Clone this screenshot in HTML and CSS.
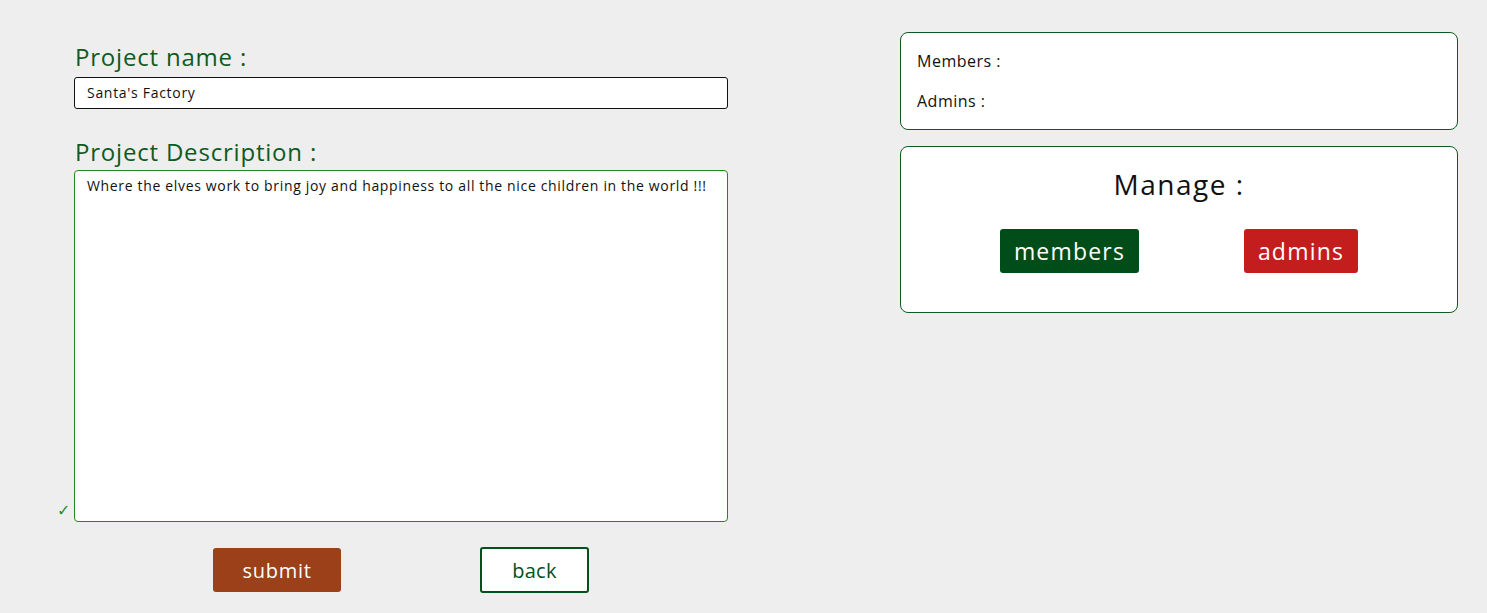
FILE: index.html
```html
<!DOCTYPE html>
<html lang="en">
<head>
<meta charset="utf-8">
<title>Edit project</title>
<link rel="stylesheet" href="styles.css">
</head>
<body>
<div class="page">
  <form class="project-form">
    <label class="field-label" for="pname">Project name :</label>
    <input class="text-input" id="pname" type="text" value="Santa's Factory">
    <label class="field-label desc-label" for="pdesc">Project Description :</label>
    <div class="textarea-wrap">
      <span class="valid-mark">✓</span>
      <textarea class="text-area" id="pdesc">Where the elves work to bring joy and happiness to all the nice children in the world !!!</textarea>
    </div>
    <div class="form-actions">
      <button type="button" class="btn btn-submit">submit</button>
      <button type="button" class="btn btn-back">back</button>
    </div>
  </form>
  <aside class="side">
    <div class="card info-card">
      <div class="info-line">Members :</div>
      <div class="info-line">Admins :</div>
    </div>
    <div class="card manage-card">
      <div class="manage-title">Manage :</div>
      <div class="manage-actions">
        <button type="button" class="btn btn-members">members</button>
        <button type="button" class="btn btn-admins">admins</button>
      </div>
    </div>
  </aside>
</div>
</body>
</html>
```
FILE: styles.css
```css
* { box-sizing: border-box; }

html, body {
  margin: 0;
  padding: 0;
  background: #eeeeee;
}

body {
  font-family: "Open Sans", "Liberation Sans", sans-serif;
  color: #111;
}

.page {
  display: grid;
  grid-template-columns: 654px 558px;
  column-gap: 172px;
  padding: 32px 0 0 74px;
}

.project-form {
  display: flex;
  flex-direction: column;
  padding-top: 10px;
}

.field-label {
  display: block;
  font-size: 24px;
  line-height: 30px;
  letter-spacing: 0.8px;
  color: #0f5b1f;
  padding-left: 1px;
  margin-bottom: 5px;
}

.desc-label {
  margin-top: 28px;
  margin-bottom: 3px;
}

.text-input {
  width: 654px;
  height: 32px;
  border: 1px solid #111;
  border-radius: 3px;
  background: #fff;
  padding: 0 12px 2px;
  font-family: "Open Sans", "Liberation Sans", sans-serif;
  font-size: 14px;
  letter-spacing: 0.7px;
  color: #111;
}

.textarea-wrap {
  position: relative;
}

.text-area {
  display: block;
  width: 654px;
  height: 352px;
  border: 1px solid #1e8a1e;
  border-radius: 4px;
  background: #fff;
  padding: 5px 12px;
  resize: none;
  font-family: "Open Sans", "Liberation Sans", sans-serif;
  font-size: 14px;
  line-height: 19px;
  letter-spacing: 0.66px;
  color: #111;
}

.valid-mark {
  position: absolute;
  left: -17px;
  bottom: 2px;
  font-size: 16px;
  color: #2a8a2a;
  font-family: "DejaVu Sans", sans-serif;
}

.form-actions {
  display: flex;
  justify-content: space-evenly;
  align-items: center;
  margin-top: 25px;
  height: 46px;
}

.btn {
  font-family: "Open Sans", "Liberation Sans", sans-serif;
  border-radius: 3px;
  cursor: pointer;
  display: flex;
  align-items: center;
  justify-content: center;
  padding: 0;
}

.btn-submit {
  width: 128px;
  height: 44px;
  background: #9b4019;
  border: none;
  color: #fff;
  font-size: 20px;
  letter-spacing: 0.7px;
}

.btn-back {
  width: 109px;
  height: 46px;
  background: #fff;
  border: 2px solid #02501b;
  color: #02501b;
  font-size: 20px;
  letter-spacing: 0.3px;
}

.side {
  display: flex;
  flex-direction: column;
  gap: 16px;
}

.card {
  background: #fff;
  border: 1px solid #0e5a22;
  border-radius: 8px;
}

.info-card {
  display: flex;
  flex-direction: column;
  gap: 20px;
  padding: 18px 16px;
}

.info-line {
  font-size: 16px;
  line-height: 20px;
  letter-spacing: 0.5px;
  color: #111;
}

.manage-card {
  padding: 20px 0 39px;
}

.manage-title {
  text-align: center;
  font-size: 28px;
  line-height: 34px;
  letter-spacing: 1.5px;
  color: #111;
}

.manage-actions {
  display: flex;
  justify-content: center;
  gap: 105px;
  margin-top: 28px;
}

.btn-members {
  width: 139px;
  height: 44px;
  background: #014d19;
  border: none;
  color: #fff;
  font-size: 23px;
  letter-spacing: 1.2px;
}

.btn-admins {
  width: 114px;
  height: 44px;
  background: #c41d1d;
  border: none;
  color: #fff;
  font-size: 23px;
  letter-spacing: 1.2px;
}
```
